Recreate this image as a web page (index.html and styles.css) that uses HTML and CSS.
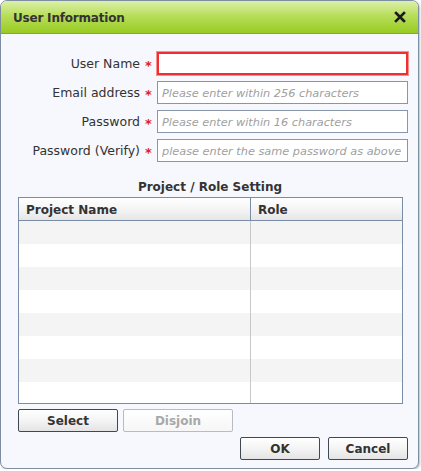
FILE: index.html
```html
<!DOCTYPE html>
<html lang="en">

<head>
    <meta charset="UTF-8">
    <title>User Information</title>
    <link rel="stylesheet" href="styles.css">
</head>

<body>
    <div class="dialog">
        <div class="dialog-header">
            <div class="dialog-title">User Information</div>
            <button class="close-button" title="Close">
                <svg width="12" height="12" viewBox="0 0 12 12">
                    <path d="M2 2 L10 10 M10 2 L2 10" stroke="#1a1a1a" stroke-width="2.6" stroke-linecap="square" fill="none" />
                </svg>
            </button>
        </div>

        <div class="dialog-body">
            <div class="form">
                <div class="form-row">
                    <label class="form-label">User Name</label>
                    <span class="required">*</span>
                    <input class="form-input focused" type="text">
                </div>
                <div class="form-row">
                    <label class="form-label">Email address</label>
                    <span class="required">*</span>
                    <input class="form-input" type="text" placeholder="Please enter within 256 characters">
                </div>
                <div class="form-row">
                    <label class="form-label">Password</label>
                    <span class="required">*</span>
                    <input class="form-input" type="password" placeholder="Please enter within 16 characters">
                </div>
                <div class="form-row">
                    <label class="form-label">Password (Verify)</label>
                    <span class="required">*</span>
                    <input class="form-input" type="password" placeholder="please enter the same password as above">
                </div>
            </div>

            <div class="section-title">Project / Role Setting</div>

            <div class="grid">
                <div class="grid-head">
                    <div class="col-project">Project Name</div>
                    <div class="col-role">Role</div>
                </div>
                <div class="grid-body">
                    <div class="grid-row"><div class="col-project"></div><div class="col-role"></div></div>
                    <div class="grid-row"><div class="col-project"></div><div class="col-role"></div></div>
                    <div class="grid-row"><div class="col-project"></div><div class="col-role"></div></div>
                    <div class="grid-row"><div class="col-project"></div><div class="col-role"></div></div>
                    <div class="grid-row"><div class="col-project"></div><div class="col-role"></div></div>
                    <div class="grid-row"><div class="col-project"></div><div class="col-role"></div></div>
                    <div class="grid-row"><div class="col-project"></div><div class="col-role"></div></div>
                    <div class="grid-row"><div class="col-project"></div><div class="col-role"></div></div>
                </div>
            </div>

            <div class="grid-buttons">
                <button class="button select-button">Select</button>
                <button class="button disjoin-button" disabled>Disjoin</button>
            </div>

            <div class="dialog-buttons">
                <button class="button footer-button">OK</button>
                <button class="button footer-button">Cancel</button>
            </div>
        </div>
    </div>
</body>

</html>
```

FILE: styles.css
```css
body,
html {
    margin: 0;
    padding: 0;
    background-color: #ffffff;
    font-family: "DejaVu Sans", Verdana, sans-serif;
    font-size: 12px;
    color: #333;
}

.dialog {
    width: 419px;
    height: 469px;
    box-sizing: border-box;
    border: 1px solid #7e8ea2;
    border-radius: 7px;
    background: #f7f8fd;
    overflow: hidden;
    box-shadow: 1px 1px 2px rgba(0, 0, 0, 0.25);
    display: flex;
    flex-direction: column;
}

.dialog-header {
    height: 32px;
    border-bottom: 1px solid #7fae17;
    background: linear-gradient(to bottom, #dcf0a8 0%, #b8de5c 45%, #98cb20 100%);
    display: flex;
    align-items: center;
    justify-content: space-between;
    padding: 0 12px 0 12px;
}

.dialog-title {
    font-weight: bold;
    font-size: 12px;
    color: #333;
    letter-spacing: -0.2px;
    padding-top: 1px;
}

.close-button {
    background: none;
    border: none;
    padding: 0;
    width: 12px;
    height: 12px;
    display: flex;
    cursor: pointer;
}

.dialog-body {
    flex: 1;
    padding: 18px 10px 0 17px;
    display: flex;
    flex-direction: column;
}

.form {
    display: flex;
    flex-direction: column;
    gap: 6px;
}

.form-row {
    display: flex;
    align-items: center;
    height: 23px;
}

.form-label {
    width: 122px;
    text-align: right;
    white-space: nowrap;
    font-size: 12.5px;
}

.required {
    width: 17px;
    text-align: center;
    color: #e02020;
    font-weight: bold;
    font-size: 13px;
    padding-top: 3px;
}

.form-input {
    width: 251px;
    height: 23px;
    box-sizing: border-box;
    border: 1px solid #8796a8;
    background: #fff;
    margin: 0;
    padding: 0 4px;
    font-family: "DejaVu Sans", Verdana, sans-serif;
    font-size: 12px;
    color: #333;
    outline: none;
}

.form-input::placeholder {
    color: #a0a0a0;
    font-style: italic;
    font-size: 11.3px;
}

.form-input.focused {
    border: 2px solid #ee3030;
    box-shadow: 0 0 0 1px #f89090;
}

.section-title {
    margin-top: 17px;
    height: 16px;
    line-height: 16px;
    text-align: center;
    font-weight: bold;
    padding-right: 6px;
    margin-bottom: 2px;
}

.grid {
    width: 385px;
    box-sizing: border-box;
    border: 1px solid #7a8da6;
    background: #fff;
}

.grid-head {
    display: flex;
    height: 22px;
    border-bottom: 1px solid #7a8da6;
    background: linear-gradient(to bottom, #ffffff 0%, #f2f2f2 60%, #e6e6e6 100%);
    font-weight: bold;
}

.grid-head .col-project,
.grid-head .col-role {
    line-height: 24px;
    padding-left: 7px;
}

.grid-head .col-project {
    border-right: 1px solid #7a8da6;
}

.col-project {
    width: 232px;
    box-sizing: border-box;
    border-right: 1px solid #c8c8c8;
}

.col-role {
    flex: 1;
    padding-left: 6px;
}

.grid-body {
    height: 182px;
    overflow: hidden;
}

.grid-row {
    display: flex;
    height: 23px;
}

.grid-row:nth-child(odd) {
    background: #f4f4f4;
}

.button {
    height: 23px;
    box-sizing: border-box;
    border: 1px solid #404850;
    border-radius: 2px;
    background: linear-gradient(to bottom, #ffffff 0%, #f4f4f4 50%, #e4e4e4 100%);
    font-family: "DejaVu Sans", Verdana, sans-serif;
    font-size: 12px;
    font-weight: bold;
    color: #333;
    padding: 0;
    cursor: pointer;
}

.button:disabled {
    border-color: #b8bcc2;
    color: #a8a8a8;
    cursor: default;
    background: linear-gradient(to bottom, #ffffff 0%, #f6f6f6 100%);
}

.grid-buttons {
    display: flex;
    gap: 5px;
    margin-top: 5px;
}

.select-button {
    width: 100px;
}

.disjoin-button {
    width: 110px;
}

.dialog-buttons {
    display: flex;
    justify-content: flex-end;
    gap: 8px;
    margin-top: 5px;
}

.footer-button {
    width: 80px;
}
```
